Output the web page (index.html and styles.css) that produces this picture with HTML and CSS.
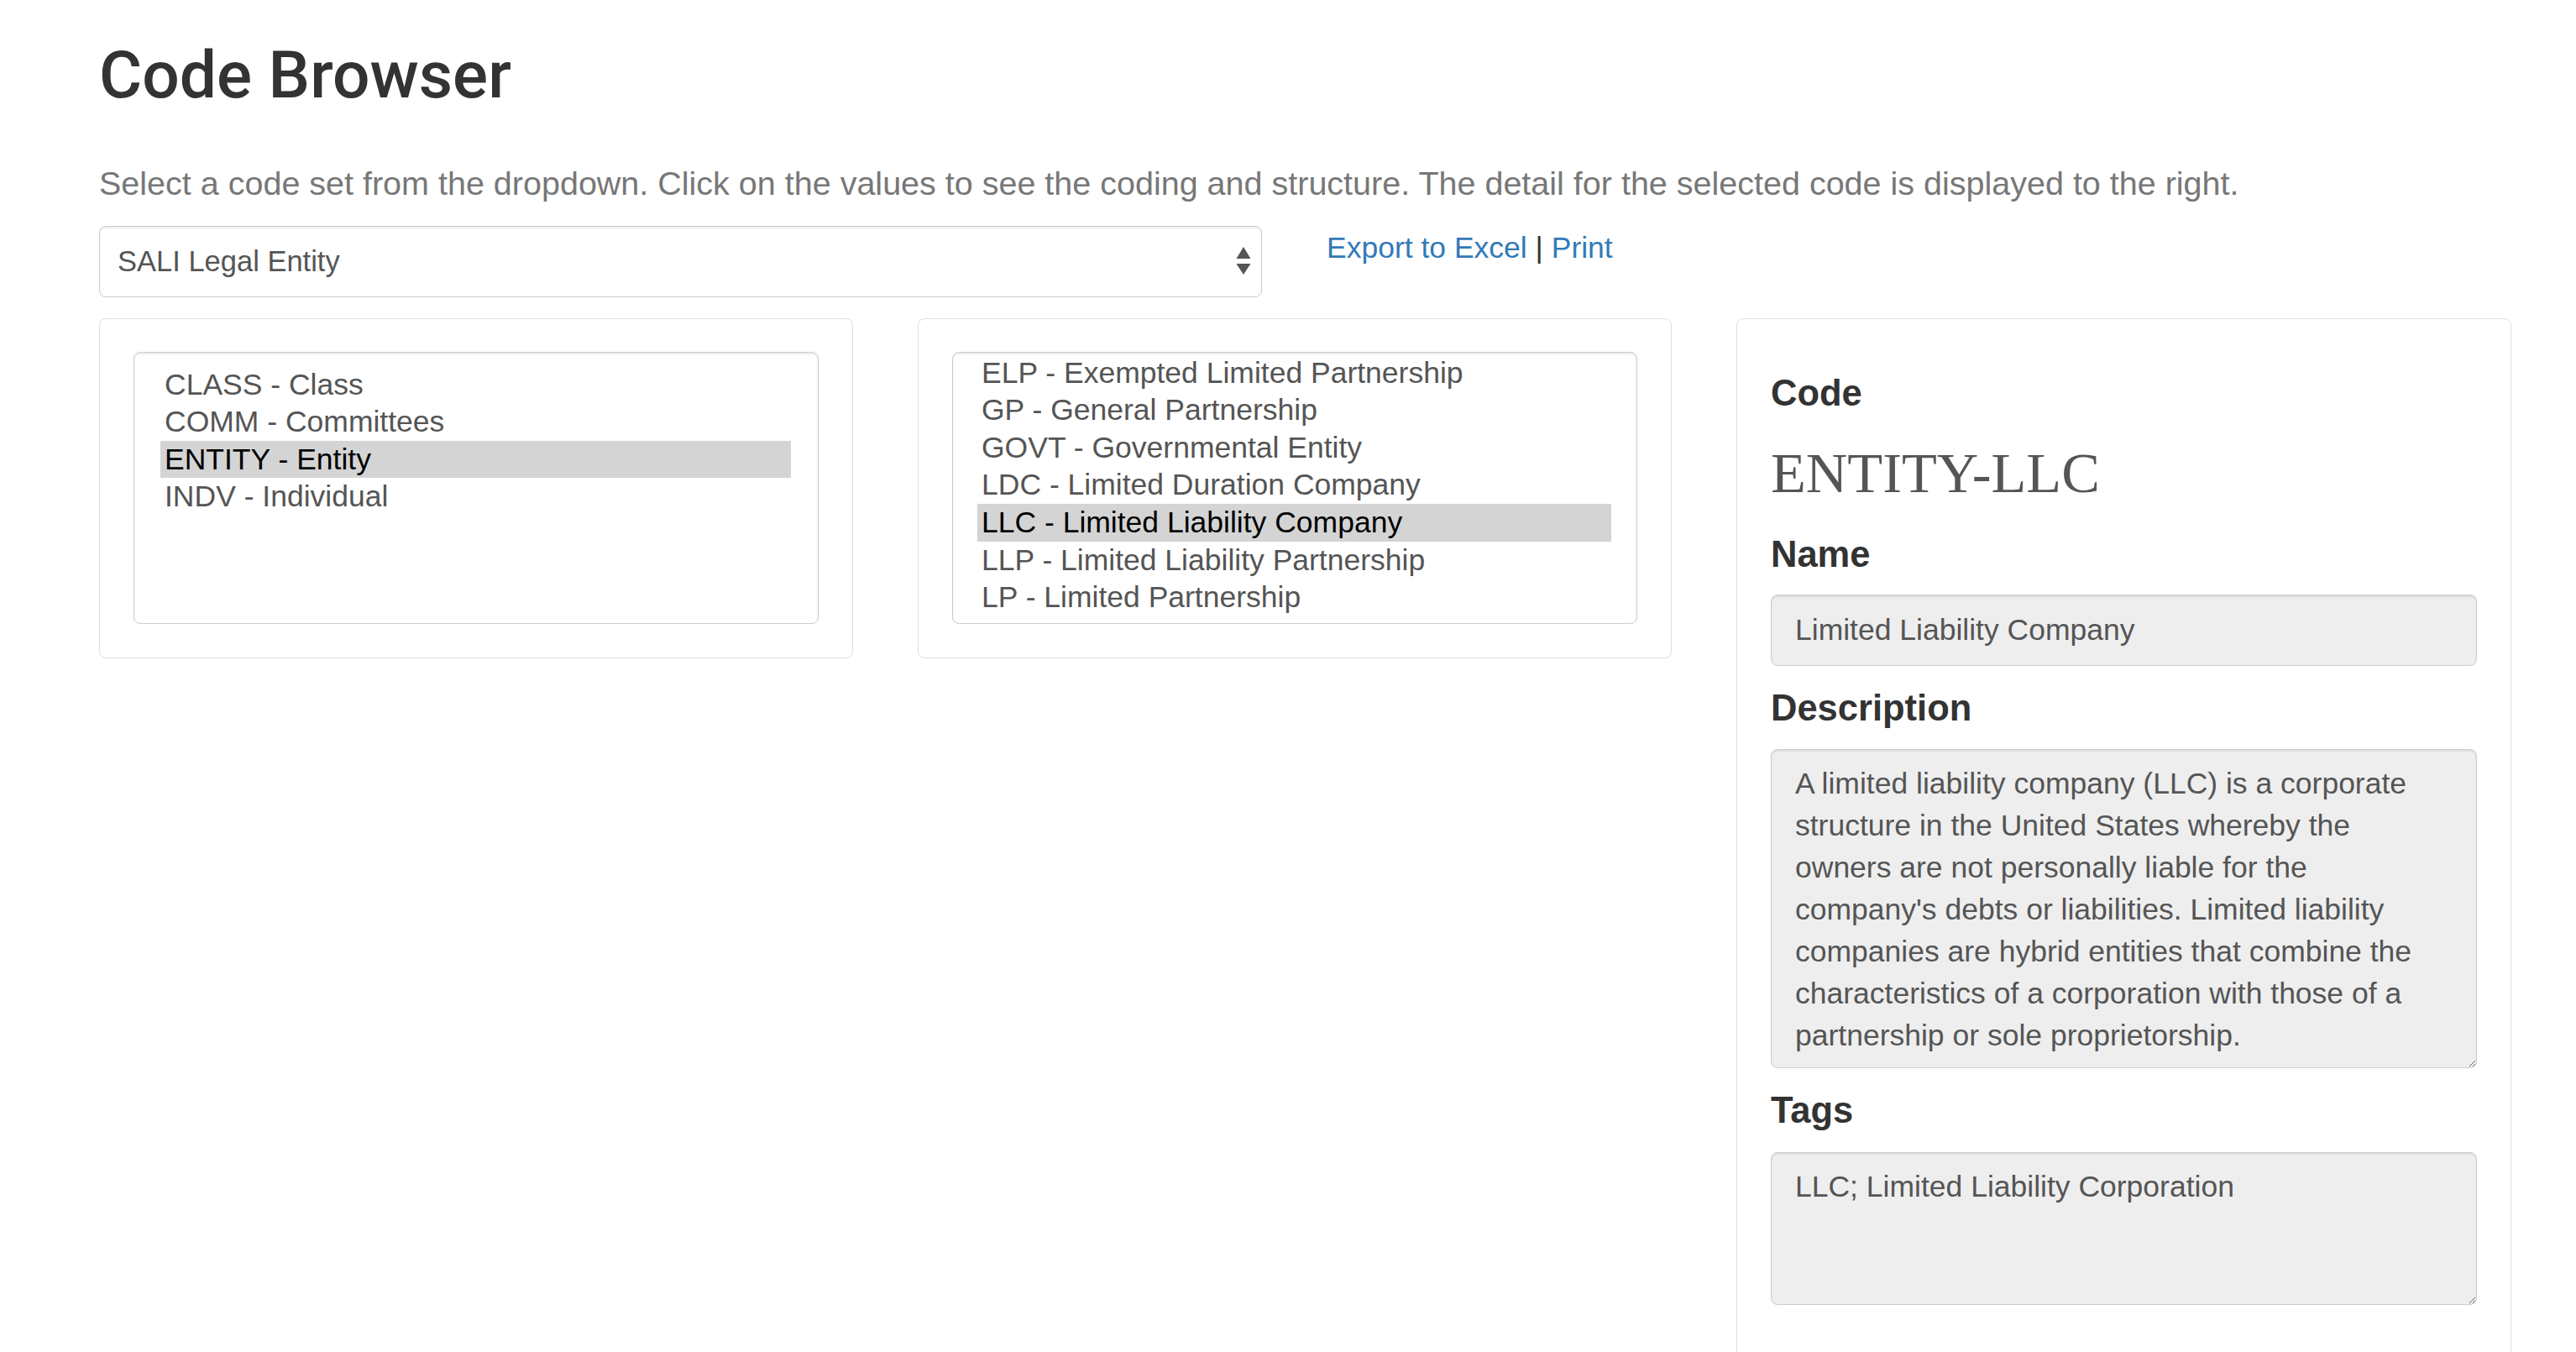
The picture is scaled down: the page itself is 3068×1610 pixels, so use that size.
FILE: index.html
```html
<!DOCTYPE html>
<html lang="en">
<head>
<meta charset="utf-8">
<title>Code Browser</title>
<link rel="stylesheet" href="styles.css">
</head>
<body>
<div class="page">
  <h1 class="title">Code Browser</h1>
  <p class="intro">Select a code set from the dropdown. Click on the values to see the coding and structure. The detail for the selected code is displayed to the right.</p>

  <div class="toolbar">
    <div class="select">
      <span class="select-value">SALI Legal Entity</span>
      <svg class="select-arrows" width="18" height="34" viewBox="0 0 18 34"><polygon points="9,0 17.5,14 0.5,14" fill="#555"/><polygon points="0.5,20 17.5,20 9,33" fill="#555"/></svg>
    </div>
    <div class="links"><a href="#">Export to Excel</a> | <a href="#">Print</a></div>
  </div>

  <div class="panels">
    <div class="panel">
      <div class="listbox">
        <div class="opt">CLASS - Class</div>
        <div class="opt">COMM - Committees</div>
        <div class="opt selected">ENTITY - Entity</div>
        <div class="opt">INDV - Individual</div>
      </div>
    </div>
    <div class="panel">
      <div class="listbox scrolled">
        <div class="opt">ELP - Exempted Limited Partnership</div>
        <div class="opt">GP - General Partnership</div>
        <div class="opt">GOVT - Governmental Entity</div>
        <div class="opt">LDC - Limited Duration Company</div>
        <div class="opt selected">LLC - Limited Liability Company</div>
        <div class="opt">LLP - Limited Liability Partnership</div>
        <div class="opt">LP - Limited Partnership</div>
      </div>
    </div>
    <div class="panel detail">
      <div class="label">Code</div>
      <div class="code">ENTITY-LLC</div>
      <div class="label">Name</div>
      <input class="control input" type="text" readonly value="Limited Liability Company">
      <div class="label">Description</div>
      <textarea class="control area area-desc" readonly>A limited liability company (LLC) is a corporate
structure in the United States whereby the
owners are not personally liable for the
company's debts or liabilities. Limited liability
companies are hybrid entities that combine the
characteristics of a corporation with those of a
partnership or sole proprietorship.</textarea>
      <div class="label">Tags</div>
      <textarea class="control area area-tags" readonly>LLC; Limited Liability Corporation</textarea>
    </div>
  </div>
</div>
</body>
</html>
```

FILE: styles.css
```css
html, body {
  margin: 0;
  padding: 0;
  background: #fff;
}

body {
  font-family: "Liberation Sans", Arial, sans-serif;
  font-size: 35.5px;
  color: #333;
  overflow: hidden;
}

.page {
  padding: 0 60px 0 118px;
}

.title {
  font-family: Roboto, "Liberation Sans", sans-serif;
  font-weight: 500;
  font-size: 78.5px;
  line-height: 85px;
  margin: 47px 0 0 0;
  color: #333;
}

.intro {
  margin: 62px 0 0 0;
  font-size: 39.5px;
  line-height: 48.6px;
  color: #777;
}

.toolbar {
  display: flex;
  align-items: flex-start;
  gap: 77px;
  margin-top: 26px;
}

.select {
  box-sizing: border-box;
  width: 1385px;
  height: 85px;
  border: 1px solid #ccc;
  border-radius: 8px;
  background: #fff;
  box-shadow: inset 0 2px 2px rgba(0, 0, 0, 0.075);
  display: flex;
  align-items: center;
  justify-content: space-between;
  padding: 0 12px 0 21px;
  color: #555;
  font-size: 34.5px;
}

.select-arrows {
  display: block;
}

.links {
  margin-top: 2px;
  line-height: 48px;
  font-size: 35.5px;
  color: #333;
}

.links a {
  color: #337ab7;
  text-decoration: none;
}

.panels {
  display: grid;
  grid-template-columns: 898px 898px 923px;
  column-gap: 77px;
  align-items: start;
  margin-top: 25px;
}

.panel {
  box-sizing: border-box;
  border: 1px solid #ddd;
  border-radius: 8px;
  padding: 39px 40px 40px 40px;
  background: #fff;
}

.listbox {
  box-sizing: border-box;
  height: 324px;
  border: 1px solid #ccc;
  border-radius: 8px;
  box-shadow: inset 0 2px 2px rgba(0, 0, 0, 0.075);
  padding: 16px 32px 0 31px;
  overflow: hidden;
  color: #555;
}

.listbox.scrolled {
  padding: 2px 30px 0 29px;
}

.opt {
  line-height: 44.6px;
  height: 44.6px;
  padding-left: 5px;
  white-space: nowrap;
}

.opt.selected {
  background: #d4d4d4;
  color: #000;
}

.detail {
  padding-bottom: 72px;
}

.label {
  font-weight: bold;
  font-size: 43.5px;
  line-height: 46px;
  color: #333;
  margin-top: 27px;
}

.detail .label:first-child {
  margin-top: 26px;
}

.code {
  font-family: "Liberation Serif", "Times New Roman", serif;
  font-size: 68.5px;
  line-height: 75px;
  color: #555;
  margin-top: 35px;
}

.code + .label {
  margin-top: 36px;
}

.control {
  display: block;
  box-sizing: border-box;
  width: 100%;
  margin: 25px 0 0 0;
  border: 1px solid #ccc;
  border-radius: 8px;
  background: #eee;
  box-shadow: inset 0 2px 2px rgba(0, 0, 0, 0.075);
  font-family: "Liberation Sans", Arial, sans-serif;
  font-size: 35.5px;
  color: #555;
  outline: none;
}

.input {
  height: 85px;
  padding: 0 28px;
}

.area {
  padding: 15px 28px;
  line-height: 50px;
  resize: vertical;
  overflow: hidden;
  margin-top: 26px;
}

.area-desc {
  height: 380px;
}

.area-tags {
  height: 182px;
  margin-top: 27px;
}
```
